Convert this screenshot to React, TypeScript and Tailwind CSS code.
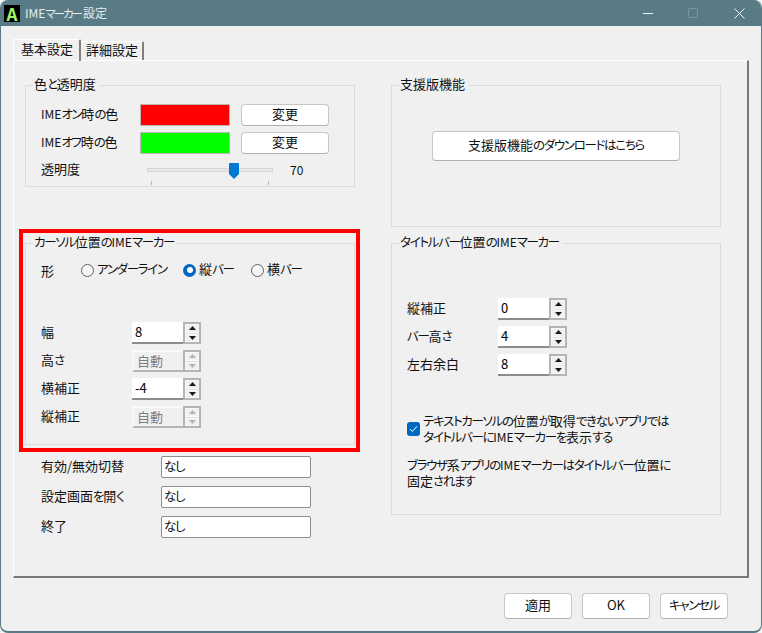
import type { ReactNode } from "react"

// kana run narrower than kanji in the dialog font, latin caps a little smaller
function Jp({ text }: { text: string }) {
  return (
    <>
      {text.split(/([\u3040-\u30ff]+|IME)/).map((part, i) => {
        if (i % 2 === 0) return part
        return part === "IME" ? (
          <span key={i} className="text-[12px]">
            {part}
          </span>
        ) : (
          <span key={i} className="text-[12.5px] tracking-[-1.3px]">
            {part}
          </span>
        )
      })}
    </>
  )
}

function Group({ title, className, children }: { title: string; className: string; children: ReactNode }) {
  return (
    <div className={`relative border border-[#dcdcdc] ${className}`}>
      <span className="absolute left-[7px] top-[-11px] bg-[#f0f0f0] pl-px pr-[3px] text-[13px] leading-[18px] whitespace-nowrap">
        <Jp text={title} />
      </span>
      {children}
    </div>
  )
}

function Button({ label, className }: { label: string; className: string }) {
  return (
    <button
      type="button"
      className={`rounded-[4px] border border-[#c6c6c6] border-b-[#b0b0b0] bg-white pb-[3px] text-[13px] leading-none ${className}`}
    >
      <Jp text={label} />
    </button>
  )
}

function Arrow({ up, color }: { up: boolean; color: string }) {
  return (
    <svg width="7" height="4" viewBox="0 0 7 4" className="block">
      <path d={up ? "M3.5 0 L7 4 L0 4 Z" : "M0 0 L7 0 L3.5 4 Z"} fill={color} />
    </svg>
  )
}

function Spin({ value, disabled }: { value: string; disabled?: boolean }) {
  const arrow = disabled ? "#b4b4b4" : "#1a1a1a"
  return (
    <div className="flex h-[22px] w-[69px]">
      <div
        className={`flex w-[51px] items-center pb-px pl-[3px] text-[13px] leading-none ${
          disabled
            ? "border-2 border-r-0 border-[#f8f8f8] border-b-[#b4b4b4] bg-[#f0f0f0] text-[#7d7d7d]"
            : "border-b-2 border-[#8c8c8c] bg-white text-black"
        }`}
      >
        {value}
      </div>
      <div className="flex w-[18px] flex-col gap-px border-2 border-[#b4b4b4] bg-[#e4e4e4]">
        <div className="flex flex-1 items-center justify-center border border-[#f8f8f8] bg-[#f0f0f0]">
          <Arrow up color={arrow} />
        </div>
        <div className="flex flex-1 items-center justify-center border border-[#f8f8f8] bg-[#f0f0f0]">
          <Arrow up={false} color={arrow} />
        </div>
      </div>
    </div>
  )
}

function SpinRow({ label, value, disabled }: { label: string; value: string; disabled?: boolean }) {
  return (
    <div className="flex h-[22px] items-center">
      <span className="w-[91px] pb-[3px] text-[13px] leading-none">
        <Jp text={label} />
      </span>
      <Spin value={value} disabled={disabled} />
    </div>
  )
}

function Radio({ label, checked, className }: { label: string; checked?: boolean; className: string }) {
  return (
    <div className={`flex items-center ${className}`}>
      {checked ? (
        <span className="flex h-[13px] w-[13px] items-center justify-center rounded-full bg-[#0067c0]">
          <span className="h-[6px] w-[6px] rounded-full bg-white" />
        </span>
      ) : (
        <span className="h-[13px] w-[13px] rounded-full border border-[#5f5f5f] bg-[#f6f6f6]" />
      )}
      <span className="ml-[3px] pb-[3px] text-[13px] leading-none whitespace-nowrap">
        <Jp text={label} />
      </span>
    </div>
  )
}

function ColorRow({ label, swatch }: { label: string; swatch: string }) {
  return (
    <div className="flex h-[22px] items-center">
      <span className="w-[99px] pb-[3px] text-[13px] leading-none">
        <Jp text={label} />
      </span>
      <div className={`h-[22px] w-[90px] border border-[#b8b8b8] ${swatch}`} />
      <Button label="変更" className="ml-[11px] h-[22px] w-[88px]" />
    </div>
  )
}

function HotkeyRow({ label }: { label: string }) {
  return (
    <div className="flex h-[22px] items-center">
      <span className="w-[120px] pb-[3px] text-[13px] leading-none">
        <Jp text={label} />
      </span>
      <div className="flex h-[22px] w-[150px] items-center rounded-[2px] border border-[#8c8c8c] bg-white pb-px pl-[2px] text-[13px] leading-none">
        <Jp text="なし" />
      </div>
    </div>
  )
}

export default function App() {
  return (
    <div className="h-[633px] w-[762px] overflow-hidden bg-[#f4f4f4] font-['Noto_Sans_CJK_JP','Liberation_Sans',sans-serif] text-[#101010] [font-feature-settings:'palt']">
      <div className="flex h-full flex-col overflow-hidden rounded-[8px] border-x border-b-2 border-[#587b85] bg-[#f0f0f0]">
        {/* title bar */}
        <div className="-mx-px flex h-[26px] shrink-0 items-center bg-[#587b85]">
          <div className="ml-[4px] flex h-[17px] w-[16px] items-center justify-center bg-black text-[17px] leading-none font-bold text-[#a4f760]">
            A
          </div>
          <span className="ml-[5px] text-[12px] leading-none text-[#e6edef]">
            IME
            <span className="text-[11.5px] tracking-[-2px]">マーカー</span>
            <span className="ml-[2px]">設定</span>
          </span>
          <div className="ml-auto flex items-center">
            <svg width="10" height="10" viewBox="0 0 10 10">
              <path d="M0 5.5 H10" stroke="#f2f5f6" strokeWidth="1" />
            </svg>
            <svg width="10" height="10" viewBox="0 0 10 10" className="ml-[35px]">
              <rect x="0.5" y="0.5" width="9" height="9" rx="1" fill="none" stroke="#7d989f" strokeWidth="1" />
            </svg>
            <svg width="11" height="11" viewBox="0 0 11 11" className="ml-[36px] mr-[17px]">
              <path d="M0.5 0.5 L10.5 10.5 M10.5 0.5 L0.5 10.5" stroke="#f2f5f6" strokeWidth="1" />
            </svg>
          </div>
        </div>

        {/* tabs */}
        <div className="ml-[12px] mt-[13px] flex h-[21px] shrink-0 items-end">
          <div className="relative z-10 -mb-px flex h-[22px] w-[68px] items-center rounded-t-[2px] border-l border-t border-white border-r-2 border-r-[#808080] pb-[5px] pl-[7px] text-[13px] leading-none">
            基本設定
          </div>
          <div className="flex h-[19px] w-[63px] items-center rounded-t-[2px] border-t border-white border-r-2 border-r-[#808080] pb-[4px] pl-[5px] text-[13px] leading-none">
            詳細設定
          </div>
        </div>

        {/* page */}
        <div className="relative ml-[12px] h-[518px] w-[736px] shrink-0 border-l border-t border-white border-r-2 border-b-2 border-r-[#7a7a7a] border-b-[#7a7a7a]">
          <div className="flex gap-[36px] pl-[11px] pt-[24px]">
            <div className="w-[330px]">
              <Group title="色と透明度" className="h-[102px] pl-[15px] pt-[18px]">
                <div className="flex flex-col gap-[6px]">
                  <ColorRow label="IMEオン時の色" swatch="bg-[#ff0000]" />
                  <ColorRow label="IMEオフ時の色" swatch="bg-[#00ff00]" />
                  <div className="flex h-[20px] items-center">
                    <span className="w-[106px] pb-[3px] text-[13px] leading-none">透明度</span>
                    <div className="relative h-[4px] w-[126px] border border-[#d6d6d6] bg-[#e7e7e7]">
                      <svg width="10" height="16" viewBox="0 0 10 16" className="absolute left-[81px] top-[-6px]">
                        <path d="M1 0 H9 A1 1 0 0 1 10 1 V11 L5 16 L0 11 V1 A1 1 0 0 1 1 0 Z" fill="#0078d4" />
                      </svg>
                      <span className="absolute left-[3px] top-[12px] h-[4px] w-px bg-[#b8b8b8]" />
                      <span className="absolute left-[120px] top-[12px] h-[4px] w-px bg-[#b8b8b8]" />
                    </div>
                    <span className="ml-[17px] pb-px text-[12px] leading-none">70</span>
                  </div>
                </div>
              </Group>

              <Group title="カーソル位置のIMEマーカー" className="mt-[56px] h-[202px] pl-[15px] pt-[16px]">
                <div className="flex h-[20px] items-center">
                  <span className="w-[40px] text-[13px] leading-none">形</span>
                  <Radio label="アンダーライン" className="w-[102px]" />
                  <Radio label="縦バー" checked className="w-[68px]" />
                  <Radio label="横バー" className="w-[60px]" />
                </div>
                <div className="mt-[42px] flex flex-col gap-[6px]">
                  <SpinRow label="幅" value="8" />
                  <SpinRow label="高さ" value="自動" disabled />
                  <SpinRow label="横補正" value="-4" />
                  <SpinRow label="縦補正" value="自動" disabled />
                </div>
              </Group>

              <div className="mt-[11px] flex flex-col gap-[8px] pl-[16px]">
                <HotkeyRow label="有効/無効切替" />
                <HotkeyRow label="設定画面を開く" />
                <HotkeyRow label="終了" />
              </div>
            </div>

            <div className="w-[330px]">
              <Group title="支援版機能" className="h-[142px] pl-[40px] pt-[45px]">
                <Button label="支援版機能のダウンロードはこちら" className="h-[30px] w-[248px]" />
              </Group>

              <Group title="タイトルバー位置のIMEマーカー" className="mt-[16px] h-[272px] pl-[15px] pt-[54px]">
                <div className="flex flex-col gap-[6px]">
                  <SpinRow label="縦補正" value="0" />
                  <SpinRow label="バー高さ" value="4" />
                  <SpinRow label="左右余白" value="8" />
                </div>
                <div className="mt-[37px] flex items-center">
                  <span className="flex h-[14px] w-[13px] items-center justify-center rounded-[3px] bg-[#0067c0]">
                    <svg width="9" height="8" viewBox="0 0 9 8">
                      <path d="M1 4.2 L3.4 6.5 L8 1.2" fill="none" stroke="#ffffff" strokeWidth="1" />
                    </svg>
                  </span>
                  <span className="ml-[3px] text-[13px] leading-[16px]">
                    <Jp text="テキストカーソルの位置が取得できないアプリでは" />
                    <br />
                    <Jp text="タイトルバーにIMEマーカーを表示する" />
                  </span>
                </div>
                <p className="mt-[12px] text-[13px] leading-[16px]">
                  <Jp text="ブラウザ系アプリのIMEマーカーはタイトルバー位置に" />
                  <br />
                  <Jp text="固定されます" />
                </p>
              </Group>
            </div>
          </div>

          {/* red annotation frame */}
          <div className="pointer-events-none absolute left-[5px] top-[168px] h-[223px] w-[341px] border-4 border-[#ff0000]" />
        </div>

        {/* footer */}
        <div className="flex justify-end gap-[10px] pr-[33px] pt-[15px]">
          <Button label="適用" className="h-[26px] w-[68px] border-[#0067c0] border-b-[#0067c0]" />
          <Button label="OK" className="h-[26px] w-[68px]" />
          <Button label="キャンセル" className="h-[26px] w-[68px]" />
        </div>
      </div>
    </div>
  )
}
